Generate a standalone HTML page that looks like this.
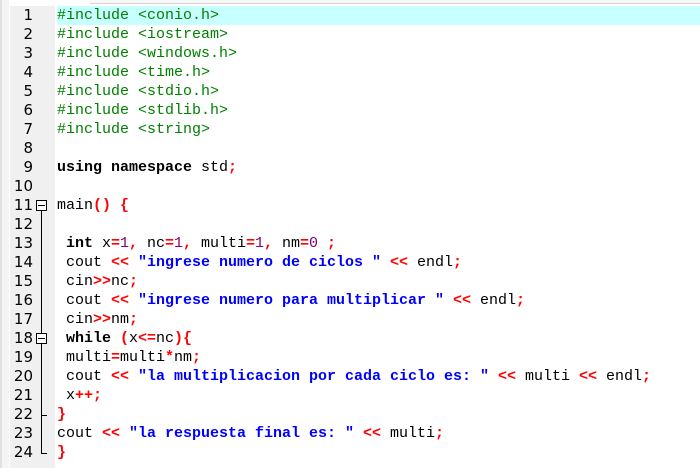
<!DOCTYPE html>
<html><head><style>
body{margin:0;width:700px;height:468px;overflow:hidden;background:#fff;position:relative;}
.ls{position:absolute;left:0;top:0;width:9px;height:468px;background:#f4f4f4;border-left:2px solid #e0e0e0;box-sizing:border-box}
.top{position:absolute;left:90px;top:0;width:610px;height:3px;border-bottom:1px solid #d4d4d4;background:#f8f8f8}
.gut{position:absolute;left:10px;top:6px;width:45px;height:462px;background:#f0f0f0}
.hl{position:absolute;left:57px;top:6px;width:643px;height:19px;background:#c8ffff}
.ln{position:absolute;left:10px;width:23px;text-align:right;font-family:"DejaVu Sans","Liberation Sans",sans-serif;font-size:15px;line-height:19px;color:#000}
.code{position:absolute;left:57px;top:6px;font-family:"Liberation Mono","DejaVu Sans Mono",monospace;font-size:15px;line-height:19px;color:#000}
.code div{height:19px;white-space:nowrap}
.code i{font-style:normal;display:inline-block;width:9px;text-align:center;height:19px;vertical-align:top}
.p{color:#008000}.o{color:#f00;font-weight:bold}.s{color:#00f;font-weight:bold}.n{color:#800080}.k{font-weight:bold}
.fold{position:absolute;left:36px;width:11px;height:11px;border:1px solid #000;background:#fff;box-sizing:border-box}
.fold:after{content:"";position:absolute;left:1px;top:4px;width:7px;height:1px;background:#000}
.vl{position:absolute;left:41px;width:1px;background:#000}
.hk{position:absolute;left:41px;width:6px;height:1px;background:#000}
</style></head><body>
<div class="ls"></div><div class="top"></div>
<div class="gut"></div><div class="hl"></div>
<div class="ln" style="top:6px">1</div><div class="ln" style="top:25px">2</div><div class="ln" style="top:44px">3</div><div class="ln" style="top:63px">4</div><div class="ln" style="top:82px">5</div><div class="ln" style="top:101px">6</div><div class="ln" style="top:120px">7</div><div class="ln" style="top:139px">8</div><div class="ln" style="top:158px">9</div><div class="ln" style="top:177px">10</div><div class="ln" style="top:196px">11</div><div class="ln" style="top:215px">12</div><div class="ln" style="top:234px">13</div><div class="ln" style="top:253px">14</div><div class="ln" style="top:272px">15</div><div class="ln" style="top:291px">16</div><div class="ln" style="top:310px">17</div><div class="ln" style="top:329px">18</div><div class="ln" style="top:348px">19</div><div class="ln" style="top:367px">20</div><div class="ln" style="top:386px">21</div><div class="ln" style="top:405px">22</div><div class="ln" style="top:424px">23</div><div class="ln" style="top:443px">24</div>
<div class="vl" style="top:210px;height:244px"></div>
<div class="fold" style="top:200px"></div>
<div class="fold" style="top:333px"></div>
<div class="hk" style="top:415px"></div>
<div class="hk" style="top:453px"></div>
<div class="code">
<div><span class="p"><i>#</i><i>i</i><i>n</i><i>c</i><i>l</i><i>u</i><i>d</i><i>e</i><i></i><i>&lt;</i><i>c</i><i>o</i><i>n</i><i>i</i><i>o</i><i>.</i><i>h</i><i>&gt;</i></span></div>
<div><span class="p"><i>#</i><i>i</i><i>n</i><i>c</i><i>l</i><i>u</i><i>d</i><i>e</i><i></i><i>&lt;</i><i>i</i><i>o</i><i>s</i><i>t</i><i>r</i><i>e</i><i>a</i><i>m</i><i>&gt;</i></span></div>
<div><span class="p"><i>#</i><i>i</i><i>n</i><i>c</i><i>l</i><i>u</i><i>d</i><i>e</i><i></i><i>&lt;</i><i>w</i><i>i</i><i>n</i><i>d</i><i>o</i><i>w</i><i>s</i><i>.</i><i>h</i><i>&gt;</i></span></div>
<div><span class="p"><i>#</i><i>i</i><i>n</i><i>c</i><i>l</i><i>u</i><i>d</i><i>e</i><i></i><i>&lt;</i><i>t</i><i>i</i><i>m</i><i>e</i><i>.</i><i>h</i><i>&gt;</i></span></div>
<div><span class="p"><i>#</i><i>i</i><i>n</i><i>c</i><i>l</i><i>u</i><i>d</i><i>e</i><i></i><i>&lt;</i><i>s</i><i>t</i><i>d</i><i>i</i><i>o</i><i>.</i><i>h</i><i>&gt;</i></span></div>
<div><span class="p"><i>#</i><i>i</i><i>n</i><i>c</i><i>l</i><i>u</i><i>d</i><i>e</i><i></i><i>&lt;</i><i>s</i><i>t</i><i>d</i><i>l</i><i>i</i><i>b</i><i>.</i><i>h</i><i>&gt;</i></span></div>
<div><span class="p"><i>#</i><i>i</i><i>n</i><i>c</i><i>l</i><i>u</i><i>d</i><i>e</i><i></i><i>&lt;</i><i>s</i><i>t</i><i>r</i><i>i</i><i>n</i><i>g</i><i>&gt;</i></span></div>
<div></div>
<div><span class="k"><i>u</i><i>s</i><i>i</i><i>n</i><i>g</i><i></i><i>n</i><i>a</i><i>m</i><i>e</i><i>s</i><i>p</i><i>a</i><i>c</i><i>e</i></span><i></i><i>s</i><i>t</i><i>d</i><span class="o"><i>;</i></span></div>
<div></div>
<div><i>m</i><i>a</i><i>i</i><i>n</i><span class="o"><i>(</i><i>)</i></span><i></i><span class="o"><i>{</i></span></div>
<div></div>
<div><i></i><span class="k"><i>i</i><i>n</i><i>t</i></span><i></i><i>x</i><span class="o"><i>=</i></span><span class="n"><i>1</i></span><span class="o"><i>,</i></span><i></i><i>n</i><i>c</i><span class="o"><i>=</i></span><span class="n"><i>1</i></span><span class="o"><i>,</i></span><i></i><i>m</i><i>u</i><i>l</i><i>t</i><i>i</i><span class="o"><i>=</i></span><span class="n"><i>1</i></span><span class="o"><i>,</i></span><i></i><i>n</i><i>m</i><span class="o"><i>=</i></span><span class="n"><i>0</i></span><i></i><span class="o"><i>;</i></span></div>
<div><i></i><i>c</i><i>o</i><i>u</i><i>t</i><i></i><span class="o"><i>&lt;</i><i>&lt;</i></span><i></i><span class="s"><i>"</i><i>i</i><i>n</i><i>g</i><i>r</i><i>e</i><i>s</i><i>e</i><i></i><i>n</i><i>u</i><i>m</i><i>e</i><i>r</i><i>o</i><i></i><i>d</i><i>e</i><i></i><i>c</i><i>i</i><i>c</i><i>l</i><i>o</i><i>s</i><i></i><i>"</i></span><i></i><span class="o"><i>&lt;</i><i>&lt;</i></span><i></i><i>e</i><i>n</i><i>d</i><i>l</i><span class="o"><i>;</i></span></div>
<div><i></i><i>c</i><i>i</i><i>n</i><span class="o"><i>&gt;</i><i>&gt;</i></span><i>n</i><i>c</i><span class="o"><i>;</i></span></div>
<div><i></i><i>c</i><i>o</i><i>u</i><i>t</i><i></i><span class="o"><i>&lt;</i><i>&lt;</i></span><i></i><span class="s"><i>"</i><i>i</i><i>n</i><i>g</i><i>r</i><i>e</i><i>s</i><i>e</i><i></i><i>n</i><i>u</i><i>m</i><i>e</i><i>r</i><i>o</i><i></i><i>p</i><i>a</i><i>r</i><i>a</i><i></i><i>m</i><i>u</i><i>l</i><i>t</i><i>i</i><i>p</i><i>l</i><i>i</i><i>c</i><i>a</i><i>r</i><i></i><i>"</i></span><i></i><span class="o"><i>&lt;</i><i>&lt;</i></span><i></i><i>e</i><i>n</i><i>d</i><i>l</i><span class="o"><i>;</i></span></div>
<div><i></i><i>c</i><i>i</i><i>n</i><span class="o"><i>&gt;</i><i>&gt;</i></span><i>n</i><i>m</i><span class="o"><i>;</i></span></div>
<div><i></i><span class="k"><i>w</i><i>h</i><i>i</i><i>l</i><i>e</i></span><i></i><span class="o"><i>(</i></span><i>x</i><span class="o"><i>&lt;</i><i>=</i></span><i>n</i><i>c</i><span class="o"><i>)</i><i>{</i></span></div>
<div><i></i><i>m</i><i>u</i><i>l</i><i>t</i><i>i</i><span class="o"><i>=</i></span><i>m</i><i>u</i><i>l</i><i>t</i><i>i</i><span class="o"><i>*</i></span><i>n</i><i>m</i><span class="o"><i>;</i></span></div>
<div><i></i><i>c</i><i>o</i><i>u</i><i>t</i><i></i><span class="o"><i>&lt;</i><i>&lt;</i></span><i></i><span class="s"><i>"</i><i>l</i><i>a</i><i></i><i>m</i><i>u</i><i>l</i><i>t</i><i>i</i><i>p</i><i>l</i><i>i</i><i>c</i><i>a</i><i>c</i><i>i</i><i>o</i><i>n</i><i></i><i>p</i><i>o</i><i>r</i><i></i><i>c</i><i>a</i><i>d</i><i>a</i><i></i><i>c</i><i>i</i><i>c</i><i>l</i><i>o</i><i></i><i>e</i><i>s</i><i>:</i><i></i><i>"</i></span><i></i><span class="o"><i>&lt;</i><i>&lt;</i></span><i></i><i>m</i><i>u</i><i>l</i><i>t</i><i>i</i><i></i><span class="o"><i>&lt;</i><i>&lt;</i></span><i></i><i>e</i><i>n</i><i>d</i><i>l</i><span class="o"><i>;</i></span></div>
<div><i></i><i>x</i><span class="o"><i>+</i><i>+</i><i>;</i></span></div>
<div><span class="o"><i>}</i></span></div>
<div><i>c</i><i>o</i><i>u</i><i>t</i><i></i><span class="o"><i>&lt;</i><i>&lt;</i></span><i></i><span class="s"><i>"</i><i>l</i><i>a</i><i></i><i>r</i><i>e</i><i>s</i><i>p</i><i>u</i><i>e</i><i>s</i><i>t</i><i>a</i><i></i><i>f</i><i>i</i><i>n</i><i>a</i><i>l</i><i></i><i>e</i><i>s</i><i>:</i><i></i><i>"</i></span><i></i><span class="o"><i>&lt;</i><i>&lt;</i></span><i></i><i>m</i><i>u</i><i>l</i><i>t</i><i>i</i><span class="o"><i>;</i></span></div>
<div><span class="o"><i>}</i></span></div>
</div>
</body></html>
